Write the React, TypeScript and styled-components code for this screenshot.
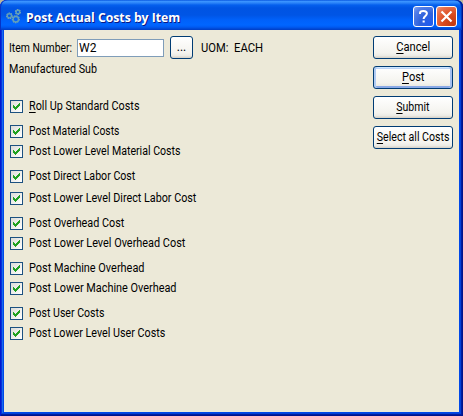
import React from "react";
import styled, { createGlobalStyle, css } from "styled-components";

const GlobalStyle = createGlobalStyle`
  * { box-sizing: border-box; }
  html, body { margin: 0; padding: 0; background: #b9b59c; overflow: hidden; }
`;

const Window = styled.main`
  display: flex;
  flex-direction: column;
  width: 463px;
  height: 416px;
  padding: 0 4px 4px;
  border-radius: 7px 7px 0 0;
  background: #0048e8;
  box-shadow: inset 1px 0 #0019cf, inset -1px -1px #00138c, inset -2px -2px #001ea0,
    inset 2px 0 #0831d9, inset -3px -3px #0441d8, inset 3px 0 #166aee;
  font: 12px/14px Roboto, "Liberation Sans", sans-serif;
  color: #000;
`;

const TitleBar = styled.header`
  display: flex;
  align-items: center;
  height: 30px;
  flex: none;
  margin: 0 -4px;
  padding: 3px 6px 0;
  gap: 2px;
  border-radius: 7px 7px 0 0;
  background: linear-gradient(180deg, #0958e0 0, #3a93ff 1.5px, #2a83f8 3px, #0560ee 5px, #0054e3 8px,
    #0055e5 15px, #0061fa 20px, #0066ff 25px, #005bf2 27px, #0046d2 29px, #003dc4 30px);
  box-shadow: inset 1px 0 #0733c5, inset -1px 0 #00138c, inset -2px 0 #0338b8;
`;

const Title = styled.h1`
  flex: 1;
  margin: 0 0 0 3px;
  font: bold 13px/18px "Open Sans", "Noto Sans", sans-serif;
  color: #fff;
  text-shadow: 1px 1px #0a1883;
  white-space: nowrap;
  transform: scaleX(0.938);
  transform-origin: 0 50%;
`;

const CaptionButton = styled.button<{ $close?: boolean }>`
  display: grid;
  place-items: center;
  width: 21px;
  height: 21px;
  padding: 0;
  border: 1px solid #fff;
  border-radius: 3px;
  background: ${(p) =>
    p.$close
      ? "radial-gradient(circle at 85% 90%, #c23a10 0, #dc4c20 45%, #e8734f 80%, #ee9a80 100%)"
      : "radial-gradient(circle at 85% 90%, #1f5cf0 0, #2f62dc 45%, #5580e8 80%, #86a6f2 100%)"};
`;

const Client = styled.section`
  display: flex;
  justify-content: space-between;
  flex: 1;
  padding: 6px 6px 0 5px;
  background: #ece9d8;
`;

const Form = styled.div`
  display: flex;
  flex-direction: column;
`;

const ItemRow = styled.div`
  display: flex;
  align-items: center;
  height: 23px;
`;

const Cell = styled.div<{ $w: number; $left?: number }>`
  width: ${(p) => p.$w}px;
  margin-left: ${(p) => p.$left ?? 0}px;
`;

const Label = styled.span<{ $k?: number }>`
  display: inline-block;
  white-space: pre;
  transform: scaleX(${(p) => p.$k ?? 0.895});
  transform-origin: 0 50%;
`;

const ItemField = styled.input`
  width: 87px;
  height: 18px;
  margin-right: 6px;
  padding: 0 0 0 1px;
  border: 1px solid #7f9db9;
  border-radius: 0;
  background: #fff;
  font: inherit;
  color: #000;
  letter-spacing: 0.2px;
  outline: 0;
`;

const Button = styled.button<{ $w: number; $isDefault?: boolean }>`
  display: flex;
  align-items: center;
  justify-content: center;
  width: ${(p) => p.$w}px;
  height: 23px;
  padding: 0 0 1px;
  border: 1px solid #003c74;
  border-radius: 3px;
  background: linear-gradient(#fff, #f4f3ee 75%, #ecebe5 88%, #d6d0c5);
  font: inherit;
  color: #000;
  ${(p) =>
    p.$isDefault &&
    css`
      box-shadow: inset 2px 0 #b1cbf2, inset -2px 0 #a4bff0, inset 0 1px #cee7ff, inset 0 2px #bcd4f6,
        inset 0 -2px #8aa9e6;
    `}
`;

const Caption = styled.span<{ $k?: number }>`
  margin: 0 -6px;
  white-space: pre;
  transform: scaleX(${(p) => p.$k ?? 0.89});
`;

const Mnemonic = styled.u`
  text-underline-offset: 2px;
  text-decoration-thickness: 1px;
  text-decoration-skip-ink: none;
`;

const Description = styled.div`
  height: 14px;
  margin: 3px 0 24px;
`;

const Options = styled.div`
  display: flex;
  flex-direction: column;
  padding: 0 0 0 1px;
`;

const Option = styled.label<{ $gap: number }>`
  display: flex;
  align-items: flex-end;
  gap: 6px;
  height: 13px;
  margin-top: ${(p) => p.$gap}px;
`;

const Box = styled.span`
  display: grid;
  place-items: center;
  width: 13px;
  height: 13px;
  border: 1px solid #1c5180;
  background: linear-gradient(135deg, #dcdcd7, #fff);
`;

const Actions = styled.div`
  display: flex;
  flex-direction: column;
  gap: 7px;
`;

const GearsIcon = () => (
  <svg width="15" height="15" viewBox="0 0 15 15" fill="none">
    <g stroke="#7fa9b4" strokeWidth="1.3" strokeDasharray="1.4 0.9">
      <circle cx="3.4" cy="6.8" r="2.7" />
      <circle cx="11.9" cy="3" r="2.4" />
      <circle cx="9.8" cy="10.2" r="3.4" />
    </g>
    <g stroke="#62a0b6" strokeWidth="1.4">
      <circle cx="3.4" cy="6.8" r="2.1" />
      <circle cx="11.9" cy="3" r="1.8" />
      <circle cx="9.8" cy="10.2" r="2.7" />
    </g>
  </svg>
);

const HelpIcon = () => (
  <svg width="19" height="19" viewBox="0 0 19 19" fill="none" stroke="#fff" strokeWidth="2">
    <path d="M6 7V6.2C6 4.8 7.4 4 9.4 4s3.5.9 3.5 2.6c0 2.3-3.3 2.4-3.3 5.4" />
    <path d="M8.6 14.5h2.1" />
  </svg>
);

const CloseIcon = () => (
  <svg width="19" height="19" viewBox="0 0 19 19" stroke="#fff" strokeWidth="2.2">
    <path d="M4.5 4.5l10 10M14.5 4.5l-10 10" />
  </svg>
);

const CheckIcon = () => (
  <svg width="7" height="7" viewBox="0 0 7 7" fill="#21a121" shapeRendering="crispEdges">
    <path d="M0 2h1v1h1v1h1V3h1V2h1V1h1V0h1v3H6v1H5v1H4v1H3v1H2V6H1V5H0z" />
  </svg>
);

const options: { text: string; gap: number; k: number; mnemonic?: boolean }[] = [
  { text: "Roll Up Standard Costs", gap: 0, k: 0.9, mnemonic: true },
  { text: "Post Material Costs", gap: 12, k: 0.86 },
  { text: "Post Lower Level Material Costs", gap: 7, k: 0.883 },
  { text: "Post Direct Labor Cost", gap: 12, k: 0.885 },
  { text: "Post Lower Level Direct Labor Cost", gap: 9, k: 0.897 },
  { text: "Post Overhead Cost", gap: 12, k: 0.9 },
  { text: "Post Lower Level Overhead Cost", gap: 7, k: 0.907 },
  { text: "Post Machine Overhead", gap: 12, k: 0.91 },
  { text: "Post Lower Machine Overhead", gap: 7, k: 0.907 },
  { text: "Post User Costs", gap: 12, k: 0.878 },
  { text: "Post Lower Level User Costs", gap: 7, k: 0.895 },
];

const actions = [
  { text: "Cancel", k: 0.93 },
  { text: "Post", k: 0.92, isDefault: true },
  { text: "Submit", k: 0.88 },
  { text: "Select all Costs", k: 0.885 },
];

const withMnemonic = (text: string) => (
  <>
    <Mnemonic>{text[0]}</Mnemonic>
    {text.slice(1)}
  </>
);

export default function App() {
  return (
    <>
      <GlobalStyle />
      <Window>
        <TitleBar>
          <GearsIcon />
          <Title>Post Actual Costs by Item</Title>
          <CaptionButton aria-label="Help">
            <HelpIcon />
          </CaptionButton>
          <CaptionButton $close aria-label="Close">
            <CloseIcon />
          </CaptionButton>
        </TitleBar>
        <Client>
          <Form>
            <ItemRow>
              <Cell $w={68}>
                <Label $k={0.865}>Item Number:</Label>
              </Cell>
              <ItemField defaultValue="W2" />
              <Button $w={23}>...</Button>
              <Cell $w={33} $left={8}>
                <Label $k={0.93}>UOM:</Label>
              </Cell>
              <Cell $w={32}>
                <Label $k={0.94}>EACH</Label>
              </Cell>
            </ItemRow>
            <Description>
              <Label>Manufactured Sub</Label>
            </Description>
            <Options>
              {options.map((o) => (
                <Option key={o.text} $gap={o.gap}>
                  <Box>
                    <CheckIcon />
                  </Box>
                  <Label $k={o.k}>{o.mnemonic ? withMnemonic(o.text) : o.text}</Label>
                </Option>
              ))}
            </Options>
          </Form>
          <Actions>
            {actions.map((a) => (
              <Button key={a.text} $w={80} $isDefault={a.isDefault}>
                <Caption $k={a.k}>{withMnemonic(a.text)}</Caption>
              </Button>
            ))}
          </Actions>
        </Client>
      </Window>
    </>
  );
}
